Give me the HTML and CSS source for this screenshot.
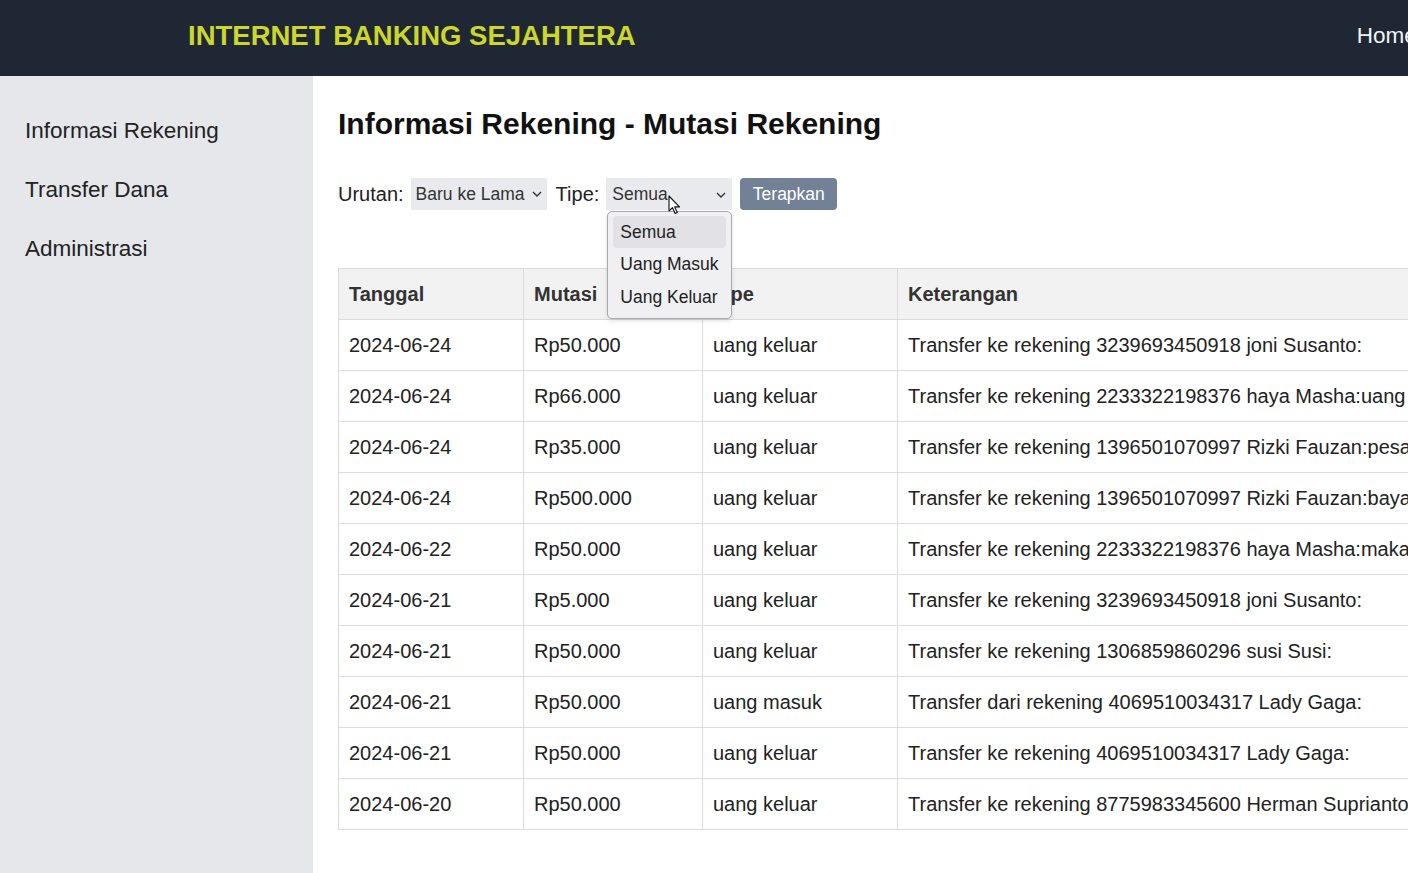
FILE: index.html
```html
<!DOCTYPE html>
<html lang="id">
<head>
<meta charset="utf-8">
<title>Internet Banking Sejahtera</title>
<link rel="stylesheet" href="styles.css">
</head>
<body>
<div class="page">
  <header class="topbar">
    <div class="brand">INTERNET BANKING SEJAHTERA</div>
    <nav class="topnav"><a href="#">Home</a></nav>
  </header>
  <div class="layout">
    <aside class="sidebar">
      <a href="#" class="side-link">Informasi Rekening</a>
      <a href="#" class="side-link">Transfer Dana</a>
      <a href="#" class="side-link">Administrasi</a>
    </aside>
    <main class="content">
      <h1 class="title">Informasi Rekening - Mutasi Rekening</h1>
      <form class="filters">
        <span class="label">Urutan:</span>
        <div class="select sel-urutan">
          <span>Baru ke Lama</span>
          <svg class="chev" width="10" height="6" viewBox="0 0 10 6"><path d="M1 1l4 4 4-4" fill="none" stroke="#333" stroke-width="1.4"/></svg>
        </div>
        <span class="label">Tipe:</span>
        <div class="select sel-tipe">
          <span>Semua</span>
          <svg class="chev" width="10" height="6" viewBox="0 0 10 6"><path d="M1 1l4 4 4-4" fill="none" stroke="#333" stroke-width="1.4"/></svg>
          <ul class="dropdown">
            <li class="opt active">Semua</li>
            <li class="opt">Uang Masuk</li>
            <li class="opt">Uang Keluar</li>
          </ul>
          <svg class="cursor" width="14" height="20" viewBox="0 0 14 20"><path d="M1 1v15l3.5-3.3 2.6 5.8 2.2-1-2.6-5.6H11.5z" fill="#fff" stroke="#111" stroke-width="1.1" stroke-linejoin="round"/></svg>
        </div>
        <button type="button" class="btn">Terapkan</button>
      </form>
      <table class="mutasi">
        <thead>
          <tr><th class="c1">Tanggal</th><th class="c2">Mutasi</th><th class="c3">Tipe</th><th class="c4">Keterangan</th></tr>
        </thead>
        <tbody>
          <tr><td>2024-06-24</td><td>Rp50.000</td><td>uang keluar</td><td>Transfer ke rekening 3239693450918 joni Susanto:</td></tr>
          <tr><td>2024-06-24</td><td>Rp66.000</td><td>uang keluar</td><td>Transfer ke rekening 2233322198376 haya Masha:uang makan</td></tr>
          <tr><td>2024-06-24</td><td>Rp35.000</td><td>uang keluar</td><td>Transfer ke rekening 1396501070997 Rizki Fauzan:pesanan</td></tr>
          <tr><td>2024-06-24</td><td>Rp500.000</td><td>uang keluar</td><td>Transfer ke rekening 1396501070997 Rizki Fauzan:bayar utang</td></tr>
          <tr><td>2024-06-22</td><td>Rp50.000</td><td>uang keluar</td><td>Transfer ke rekening 2233322198376 haya Masha:makan</td></tr>
          <tr><td>2024-06-21</td><td>Rp5.000</td><td>uang keluar</td><td>Transfer ke rekening 3239693450918 joni Susanto:</td></tr>
          <tr><td>2024-06-21</td><td>Rp50.000</td><td>uang keluar</td><td>Transfer ke rekening 1306859860296 susi Susi:</td></tr>
          <tr><td>2024-06-21</td><td>Rp50.000</td><td>uang masuk</td><td>Transfer dari rekening 4069510034317 Lady Gaga:</td></tr>
          <tr><td>2024-06-21</td><td>Rp50.000</td><td>uang keluar</td><td>Transfer ke rekening 4069510034317 Lady Gaga:</td></tr>
          <tr><td>2024-06-20</td><td>Rp50.000</td><td>uang keluar</td><td>Transfer ke rekening 8775983345600 Herman Suprianto:</td></tr>
        </tbody>
      </table>
    </main>
  </div>
</div>
</body>
</html>
```

FILE: styles.css
```css
html, body {
  margin: 0;
  padding: 0;
  overflow: hidden;
}
body {
  font-family: "Liberation Sans", Arial, sans-serif;
  color: #222;
  background: #fff;
}
.page {
  width: 1560px;
}
.topbar {
  height: 76px;
  background: #1f2734;
  display: flex;
  align-items: center;
  padding-left: 188px;
  box-sizing: border-box;
}
.brand {
  color: #cdd62b;
  font-weight: bold;
  font-size: 27.5px;
  letter-spacing: 0;
  margin-top: -4px;
}
.topnav {
  margin-left: 721px;
  margin-top: -4px;
}
.topnav a {
  color: #f3f4f6;
  text-decoration: none;
  font-size: 22.5px;
}
.layout {
  display: flex;
  min-height: calc(100vh - 76px);
}
.sidebar {
  width: 313px;
  flex: none;
  background: #e5e7eb;
  display: flex;
  flex-direction: column;
  padding: 42px 0 0 25px;
  box-sizing: border-box;
  gap: 33px;
}
.side-link {
  color: #222;
  text-decoration: none;
  font-size: 22.5px;
  line-height: 26px;
}
.content {
  flex: 1;
  padding: 31px 25px 0 25px;
}
.title {
  margin: 0;
  font-size: 30px;
  font-weight: bold;
  line-height: 34px;
  color: #111;
}
.filters {
  display: flex;
  align-items: center;
  gap: 8px;
  margin-top: 37px;
  height: 32px;
}
.label {
  font-size: 20px;
  color: #222;
}
.select {
  position: relative;
  height: 32px;
  background: #e9eaed;
  font-size: 17.5px;
  color: #333;
  display: flex;
  align-items: center;
  padding-left: 5px;
  box-sizing: border-box;
}
.sel-urutan {
  width: 136px;
  margin-left: -1px;
  margin-right: 1px;
}
.sel-urutan .chev {
  margin-left: 7px;
}
.sel-tipe {
  width: 126px;
  padding-left: 6px;
  margin-left: -1px;
}
.sel-tipe .chev {
  position: absolute;
  right: 6px;
  top: 14px;
}
.dropdown {
  position: absolute;
  left: 1px;
  top: 33px;
  width: 125px;
  height: 108px;
  margin: 0;
  padding: 4px 5px;
  box-sizing: border-box;
  list-style: none;
  background: #f0f0f2;
  border: 1px solid #a9a9ad;
  border-radius: 5px;
  box-shadow: 0 2px 4px rgba(0,0,0,0.12);
  z-index: 5;
}
.opt {
  height: 33px;
  line-height: 33px;
  padding-left: 7px;
  font-size: 17.5px;
  color: #222;
  border-radius: 4px;
}
.opt.active {
  background: #e2e2e6;
  height: 32px;
  line-height: 32px;
}
.cursor {
  position: absolute;
  left: 62px;
  top: 17px;
  z-index: 6;
}
.btn {
  height: 32px;
  width: 97px;
  border: none;
  border-radius: 4px;
  background: #728196;
  color: #fff;
  font-family: "Liberation Sans", Arial, sans-serif;
  font-size: 17.5px;
  padding: 0;
}
.mutasi {
  margin-top: 58px;
  border-collapse: collapse;
  table-layout: fixed;
  width: 1260px;
  font-size: 20px;
}
.mutasi th, .mutasi td {
  border: 1px solid #dcdcdc;
  padding: 12.5px 10px;
  line-height: 25px;
  text-align: left;
  white-space: nowrap;
  overflow: hidden;
  color: #222;
}
.mutasi th {
  background: #f2f2f2;
  font-weight: bold;
  color: #333;
}
.c1 { width: 164px; }
.c2 { width: 158px; }
.c3 { width: 174px; }
.c4 { width: auto; }
```
